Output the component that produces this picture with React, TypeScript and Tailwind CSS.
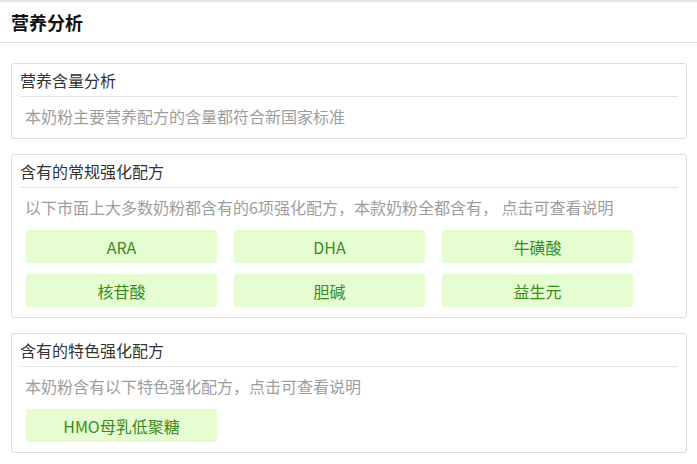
import React from 'react';

const font = { fontFamily: '"Microsoft YaHei", "Noto Sans CJK SC", sans-serif' };

const Tag: React.FC<{ label: string }> = ({ label }) => (
  <button className="h-[33px] w-[191px] rounded-[2px] bg-[#e6fdd1] text-[16px] text-[#3a8a1c] flex items-center justify-center">
    {label}
  </button>
);

const Card: React.FC<{ title: string; desc: string; tags?: string[] }> = ({ title, desc, tags }) => (
  <div className="border border-[#dcdcdc] rounded-[3px] px-[8px] bg-white">
    <div className="h-[33px] flex items-center border-b border-[#e3e3e3] text-[16px] text-[#333]">{title}</div>
    <div className="h-[37px] flex items-center pl-[5px] text-[16px] text-[#9d9d9d]">{desc}</div>
    {tags ? (
      <div className="grid grid-cols-[191px_191px_191px] gap-x-[17px] gap-y-[11px] ml-[6px] mt-[5px] mb-[10px]">
        {tags.map((t) => (
          <Tag key={t} label={t} />
        ))}
      </div>
    ) : (
      <div className="h-[4px]" />
    )}
  </div>
);

const App: React.FC = () => {
  return (
    <div className="w-full min-h-screen bg-white" style={font}>
      <div className="border-t-2 border-[#e6e6e6]">
        <div className="h-[41px] flex items-center px-[11px] border-b border-[#dedede] text-[18px] font-bold text-[#111]">
          营养分析
        </div>
      </div>

      <div className="pl-[11px] pr-[10px] pt-[20px] flex flex-col gap-[15px]">
        <Card title="营养含量分析" desc="本奶粉主要营养配方的含量都符合新国家标准" />
        <Card
          title="含有的常规强化配方"
          desc="以下市面上大多数奶粉都含有的6项强化配方，本款奶粉全都含有， 点击可查看说明"
          tags={['ARA', 'DHA', '牛磺酸', '核苷酸', '胆碱', '益生元']}
        />
        <Card
          title="含有的特色强化配方"
          desc="本奶粉含有以下特色强化配方，点击可查看说明"
          tags={['HMO母乳低聚糖']}
        />
      </div>
    </div>
  );
};

export default App;
